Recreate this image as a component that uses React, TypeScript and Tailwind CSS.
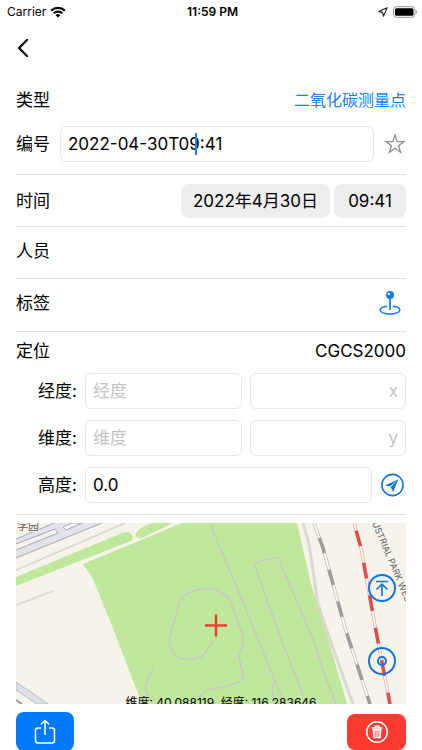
import React from "react";
import { ChevronLeft } from "lucide-react";

interface CoordinateFieldProps {
  id: string;
  label: string;
  planar: string;
}

const fieldClass =
  "h-9 min-w-0 rounded-md border border-[#e8e8ea] bg-white px-[7px] text-[17px] text-black outline-none placeholder:text-[#c4c4c7]";

function StatusBar() {
  return (
    <header className="grid h-[22px] grid-cols-3 items-center pr-1 pl-[7px] text-[12px]">
      <div className="flex items-center gap-1">
        <span>Carrier</span>
        <svg viewBox="0 0 16 12" className="h-3 w-4" aria-hidden="true">
          <g fill="none" stroke="#000" strokeWidth="2.2">
            <path d="M1.2 4.6a9.8 9.8 0 0 1 13.6 0" />
            <path d="M3.7 7.3a6.2 6.2 0 0 1 8.6 0" />
          </g>
          <path d="M8 11.6 5.6 9.2a3.5 3.5 0 0 1 4.8 0z" />
        </svg>
      </div>
      <span className="text-center font-semibold">11:59 PM</span>
      <div className="flex items-center justify-end gap-1">
        <svg viewBox="0 0 10 10" className="h-[10px] w-[10px]" aria-hidden="true">
          <path
            d="M9.2.8.8 4.6l3.8.8.8 3.8z"
            fill="none"
            stroke="#222"
            strokeWidth="1.1"
            strokeLinejoin="round"
          />
        </svg>
        <svg viewBox="0 0 26 12" className="h-3 w-[26px]" aria-hidden="true">
          <rect x="1.5" y=".7" width="21.5" height="10.6" rx="3" fill="none" stroke="#999" />
          <rect x="3" y="2.2" width="18.5" height="7.6" rx="1.6" />
          <path d="M24.2 4v4c1.2-.6 1.2-3.4 0-4z" fill="#999" />
        </svg>
      </div>
    </header>
  );
}

function CoordinateField({ id, label, planar }: CoordinateFieldProps) {
  return (
    <div className="flex items-center gap-2">
      <label htmlFor={id} className="w-[61px] text-right">
        {label}:
      </label>
      <input id={id} placeholder={label} className={`${fieldClass} flex-1`} />
      <input
        aria-label={planar}
        placeholder={planar}
        className={`${fieldClass} flex-1 text-right`}
      />
    </div>
  );
}

function MapTiles() {
  return (
    <svg
      viewBox="16 522 390 181"
      preserveAspectRatio="xMidYMid slice"
      className="h-full w-full"
      aria-hidden="true"
    >
      <rect x="16" y="522" width="390" height="181" fill="#f6f3eb" />

      {/* Avenue and car parks */}
      <path d="M16 538 54 522H102L16 557z" fill="#e2e3ea" />
      <path d="M16 538 54 522M16 557 102 522" stroke="#a6a8b0" fill="none" />
      <path d="M16 543 55 528 58 532 16 549" fill="#f6f3eb" stroke="#a6a8b0" />
      <path d="M63 526 72 522H82L66 529z" fill="#fff" stroke="#a6a8b0" />
      <path
        d="M16 569 125 522M16 604 53 590"
        stroke="#dedbd5"
        strokeWidth="2"
        strokeLinecap="round"
      />
      <path d="M16 681 48 703H37L16 689z" fill="#dfe1ea" stroke="#b9bcc6" />
      <path d="M16 699 22 703" stroke="#9b9da6" strokeWidth="2" />

      {/* Green areas */}
      <g fill="#c0e89c">
        <path d="M16 576 122 532Q129 529 132 534T128 541L16 585z" />
        <path d="M136 532Q138 528 143 526L152 522H173L142 537Q134 538 136 532z" />
        <path d="M83 563 182 522H297L311 583 326 630 347 703H142L114 630 93 578z" />
      </g>

      {/* Footpaths */}
      <g fill="none" stroke="#cbc8c2" strokeWidth="1.6" strokeLinejoin="round" strokeLinecap="round">
        <path d="M211 525 226 560 275 680 284 703M275 680 272 687 274 703" />
        <path d="M305 699 278 630 255 565Q254 562 258 561L278 556 316 645 322 667 336 703" />
        <path d="M213 640 207 649Q203 656 198 657 188 660 180 657 174 654 172 650 168 643 170 636L180 600Q185 593 193 590 207 586 216 588L229 597 243 634V642L239 656 243 673Q243 679 239 681L224 686 207 689 198 697" />
        <path d="M153 668 146 682 145 687 150 700" />
        <path d="M303 522 309 543 318 603 328 633 353 703" stroke="#dcd7d1" strokeWidth="3" />
      </g>

      {/* Railways */}
      <g fill="none">
        <path d="M314 522 323 547 346 630 370 703" stroke="#c4c2be" strokeWidth="3.4" />
        <path d="M314 522 323 547 346 630 370 703" stroke="#fbfaf7" strokeWidth="1.8" />
        <path
          d="M314 522 323 547 346 630 370 703"
          stroke="#9d9c9a"
          strokeWidth="3.4"
          strokeDasharray="16 17"
          strokeDashoffset="-16"
        />
        <path d="M354 522 361 547 376 630 390 703" stroke="#e9b3ae" strokeWidth="3.4" />
        <path d="M354 522 361 547 376 630 390 703" stroke="#fbf3ef" strokeWidth="1.8" />
        <path
          d="M354 522 361 547 376 630 390 703"
          stroke="#dc4f4c"
          strokeWidth="3.4"
          strokeDasharray="16 17"
          strokeDashoffset="-8"
        />
      </g>

      <g fill="#5f5f5f" stroke="#f6f3eb" strokeWidth="2" paintOrder="stroke">
        <text x="17" y="529" fontSize="11">
          学园
        </text>
        <text fontSize="9" transform="translate(372 522) rotate(67)">
          USTRIAL PARK WEST
        </text>
      </g>

      <path d="M205 624.5H227M216 613.5V635.5" stroke="#e8402f" strokeWidth="2.4" />
    </svg>
  );
}

export default function App() {
  return (
    <div className="h-screen overflow-hidden bg-white font-['Inter','Noto_Sans_CJK_SC',sans-serif] text-[17px] leading-6 text-black">
      <StatusBar />

      <nav className="flex h-[52px] items-center px-[7px]">
        <button type="button" aria-label="返回">
          <ChevronLeft className="h-8 w-8" strokeWidth={1.7} />
        </button>
      </nav>

      <main className="px-4">
        <div className="divide-y divide-[#e2e2e4] border-b border-[#e2e2e4]">
          <section className="pt-[14px] pb-3">
            <div className="flex items-center justify-between">
              <span>类型</span>
              <button type="button" className="text-[16px] text-[#1780f5]">
                二氧化碳测量点
              </button>
            </div>
            <div className="mt-[14px] flex items-center gap-[10px]">
              <label htmlFor="number">编号</label>
              <div className="relative flex flex-1">
                <input
                  id="number"
                  defaultValue="2022-04-30T09:41"
                  className={`${fieldClass} w-full`}
                />
                <span className="absolute top-[7px] left-[135px] h-[22px] w-[2px] bg-[#1780f5]" />
              </div>
              <button type="button" aria-label="收藏">
                <svg viewBox="1 1 22 22" className="h-[22px] w-[22px]">
                  <path
                    d="m12 3 2.2 6.6h6.9l-5.6 4.1 2.1 6.6-5.6-4-5.6 4 2.1-6.6-5.6-4.1h6.9z"
                    fill="none"
                    stroke="#8e8e93"
                    strokeWidth="1.3"
                  />
                </svg>
              </button>
            </div>
          </section>

          <section className="flex h-[52px] items-center justify-between">
            <span>时间</span>
            <div className="flex gap-1">
              <button type="button" className="h-[34px] rounded-lg bg-[#eeeeef] px-3">
                2022年4月30日
              </button>
              <button type="button" className="h-[34px] w-[72px] rounded-lg bg-[#eeeeef]">
                09:41
              </button>
            </div>
          </section>

          <section className="flex h-[52px] items-center pb-1">人员</section>

          <section className="flex h-[53px] items-center justify-between pb-1">
            <span>标签</span>
            <button type="button" aria-label="添加标签" className="pr-1">
              <svg viewBox="0 0 24 26" className="h-[26px] w-6" fill="none" stroke="#0a7aff">
                <path
                  d="M9.2 16.2c-4.1.4-7 1.8-7 3.8 0 2.3 4.3 4 9.8 4s9.8-1.7 9.8-4c0-2-2.9-3.4-7-3.8"
                  strokeWidth="1.5"
                />
                <path d="M12 8v12" strokeWidth="1.7" />
                <circle cx="12" cy="5" r="4" fill="#0a7aff" stroke="none" />
                <circle cx="10.8" cy="3.9" r="1.2" fill="#fff" stroke="none" />
              </svg>
            </button>
          </section>

          <section className="pt-[7px] pb-[11px]">
            <div className="flex items-center justify-between">
              <span>定位</span>
              <span>CGCS2000</span>
            </div>
            <div className="mt-[10px] flex flex-col gap-[11px]">
              <CoordinateField id="longitude" label="经度" planar="x" />
              <CoordinateField id="latitude" label="维度" planar="y" />
              <div className="flex items-center gap-2">
                <label htmlFor="altitude" className="w-[61px] text-right">
                  高度:
                </label>
                <input id="altitude" defaultValue="0.0" className={`${fieldClass} flex-1`} />
                <button type="button" aria-label="当前位置">
                  <svg viewBox="0 0 26 26" className="h-[26px] w-[26px]">
                    <circle cx="12.5" cy="13" r="10.6" fill="none" stroke="#1473e6" strokeWidth="1.6" />
                    <path d="M18.4 7.2 5 13.4 9.8 14.5zM18.4 7.2 10.6 15.2 13.2 20z" fill="#1473e6" />
                  </svg>
                </button>
              </div>
            </div>
          </section>
        </div>

        <div className="relative mt-2 h-[181px] overflow-hidden">
          <MapTiles />
          <p className="absolute top-[168px] w-full pl-5 text-center text-[12px] leading-6">
            维度: 40.088119, 经度: 116.283646
          </p>
          <div className="absolute top-[51px] right-[10px] flex flex-col gap-[45px]">
            <button type="button" aria-label="置顶">
              <svg viewBox="0 0 28 28" className="h-7 w-7" fill="none" stroke="#1473e6" strokeWidth="2">
                <circle cx="14" cy="14" r="13" />
                <path d="M8 7.5h12M14 22V10.5M8.5 15.5l5.5-5.3 5.5 5.3" strokeWidth="1.7" />
              </svg>
            </button>
            <button type="button" aria-label="居中">
              <svg viewBox="0 0 28 28" className="h-7 w-7" fill="none" stroke="#1473e6" strokeWidth="2">
                <circle cx="14" cy="14" r="13" />
                <circle cx="14" cy="14" r="4" />
              </svg>
            </button>
          </div>
        </div>

        <footer className="mt-2 flex items-center justify-between">
          <button
            type="button"
            aria-label="分享"
            className="flex h-[39px] w-[58px] items-center justify-center rounded-lg bg-[#007aff]"
          >
            <svg viewBox="0 0 22 26" className="h-[26px] w-[22px]" fill="none" stroke="#fff" strokeWidth="1.5">
              <path d="M7 9H4Q1.5 9 1.5 11.5V21.5Q1.5 24 4 24H18Q20.5 24 20.5 21.5V11.5Q20.5 9 18 9H15M11 16V1.5M6.8 5.5 11 1.5 15.2 5.5" />
            </svg>
          </button>
          <button
            type="button"
            aria-label="删除"
            className="flex h-9 w-[59px] items-center justify-center rounded-lg bg-[#ff3b30]"
          >
            <svg viewBox="0 0 24 24" className="h-6 w-6" fill="none" stroke="#fff">
              <circle cx="12" cy="12" r="10.3" strokeWidth="1.5" />
              <path d="M6.5 8H17.5M10 7.5V6H14V7.5" strokeWidth="1.3" />
              <path d="M7.5 9H16.5L15.7 18.3H8.3z" fill="#fff" stroke="none" />
              <path
                d="M10 10.5 10.3 16.8M12 10.5V16.8M14 10.5 13.7 16.8"
                stroke="#ff3b30"
                strokeWidth=".8"
              />
            </svg>
          </button>
        </footer>
      </main>
    </div>
  );
}
